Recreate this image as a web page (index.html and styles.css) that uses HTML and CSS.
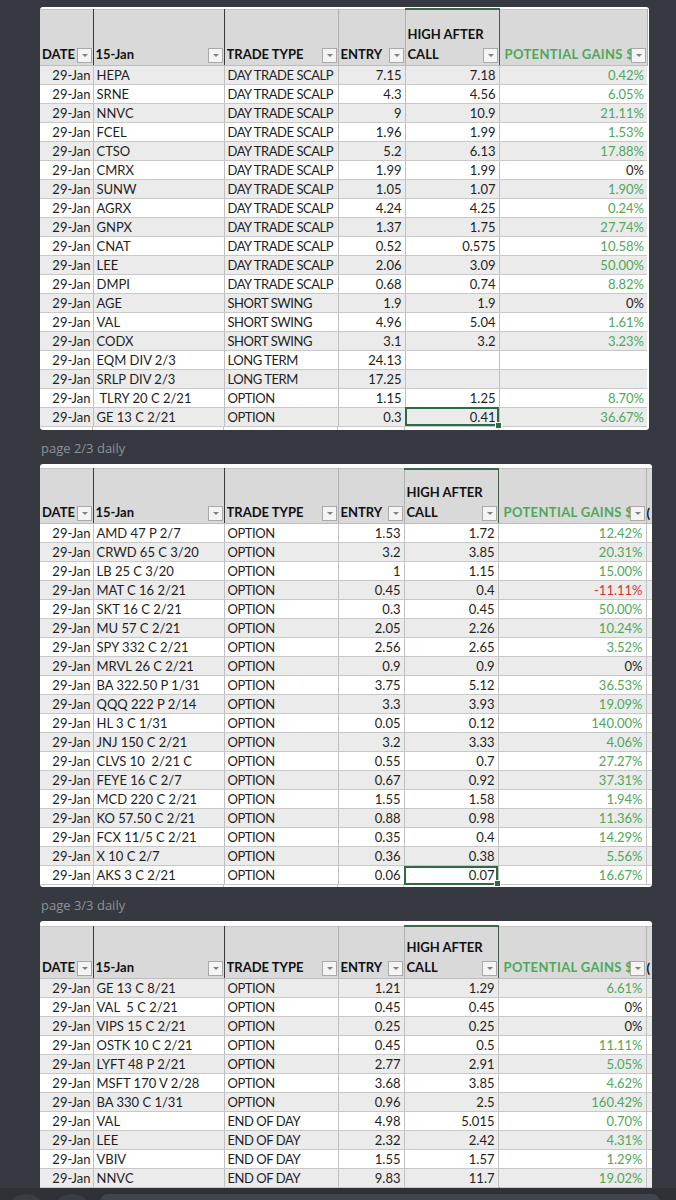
FILE: index.html
```html
<!DOCTYPE html>
<html>
<head>
<meta charset="utf-8">
<link rel="stylesheet" href="styles.css">
</head>
<body>
<div class="page">

  <div class="sheet s1">
    <table class="grid">
      <colgroup><col class="c-date"><col class="c-name"><col class="c-type"><col class="c-entry1"><col class="c-high"><col class="c-pot"></colgroup>
      <thead>
        <tr class="hrow">
          <th class="dk"><div class="h"><span class="ht">DATE</span><span class="dd"></span></div></th>
          <th class="dk"><div class="h"><span class="ht">15-Jan</span><span class="dd"></span></div></th>
          <th class="lt"><div class="h"><span class="ht">TRADE TYPE</span><span class="dd"></span></div></th>
          <th class="lt"><div class="h"><span class="ht">ENTRY</span><span class="dd"></span></div></th>
          <th class="sel"><div class="h"><span class="ht two">HIGH AFTER<br>CALL</span><span class="dd"></span></div></th>
          <th class="lt"><div class="h"><span class="ht green">POTENTIAL GAINS $</span><span class="dd"></span></div></th>
        </tr>
      </thead>
      <tbody class="odd-gray">
        <tr><td class="r">29-Jan</td><td>HEPA</td><td class="t">DAY TRADE SCALP</td><td class="r">7.15</td><td class="r">7.18</td><td class="r g">0.42%</td></tr>
        <tr><td class="r">29-Jan</td><td>SRNE</td><td class="t">DAY TRADE SCALP</td><td class="r">4.3</td><td class="r">4.56</td><td class="r g">6.05%</td></tr>
        <tr><td class="r">29-Jan</td><td>NNVC</td><td class="t">DAY TRADE SCALP</td><td class="r">9</td><td class="r">10.9</td><td class="r g">21.11%</td></tr>
        <tr><td class="r">29-Jan</td><td>FCEL</td><td class="t">DAY TRADE SCALP</td><td class="r">1.96</td><td class="r">1.99</td><td class="r g">1.53%</td></tr>
        <tr><td class="r">29-Jan</td><td>CTSO</td><td class="t">DAY TRADE SCALP</td><td class="r">5.2</td><td class="r">6.13</td><td class="r g">17.88%</td></tr>
        <tr><td class="r">29-Jan</td><td>CMRX</td><td class="t">DAY TRADE SCALP</td><td class="r">1.99</td><td class="r">1.99</td><td class="r">0%</td></tr>
        <tr><td class="r">29-Jan</td><td>SUNW</td><td class="t">DAY TRADE SCALP</td><td class="r">1.05</td><td class="r">1.07</td><td class="r g">1.90%</td></tr>
        <tr><td class="r">29-Jan</td><td>AGRX</td><td class="t">DAY TRADE SCALP</td><td class="r">4.24</td><td class="r">4.25</td><td class="r g">0.24%</td></tr>
        <tr><td class="r">29-Jan</td><td>GNPX</td><td class="t">DAY TRADE SCALP</td><td class="r">1.37</td><td class="r">1.75</td><td class="r g">27.74%</td></tr>
        <tr><td class="r">29-Jan</td><td>CNAT</td><td class="t">DAY TRADE SCALP</td><td class="r">0.52</td><td class="r">0.575</td><td class="r g">10.58%</td></tr>
        <tr><td class="r">29-Jan</td><td>LEE</td><td class="t">DAY TRADE SCALP</td><td class="r">2.06</td><td class="r">3.09</td><td class="r g">50.00%</td></tr>
        <tr><td class="r">29-Jan</td><td>DMPI</td><td class="t">DAY TRADE SCALP</td><td class="r">0.68</td><td class="r">0.74</td><td class="r g">8.82%</td></tr>
        <tr><td class="r">29-Jan</td><td>AGE</td><td class="t">SHORT SWING</td><td class="r">1.9</td><td class="r">1.9</td><td class="r">0%</td></tr>
        <tr><td class="r">29-Jan</td><td>VAL</td><td class="t">SHORT SWING</td><td class="r">4.96</td><td class="r">5.04</td><td class="r g">1.61%</td></tr>
        <tr><td class="r">29-Jan</td><td>CODX</td><td class="t">SHORT SWING</td><td class="r">3.1</td><td class="r">3.2</td><td class="r g">3.23%</td></tr>
        <tr><td class="r">29-Jan</td><td>EQM DIV 2/3</td><td class="t">LONG TERM</td><td class="r">24.13</td><td class="r"></td><td class="r"></td></tr>
        <tr><td class="r">29-Jan</td><td>SRLP DIV 2/3</td><td class="t">LONG TERM</td><td class="r">17.25</td><td class="r"></td><td class="r"></td></tr>
        <tr><td class="r">29-Jan</td><td>&nbsp;TLRY 20 C 2/21</td><td class="t">OPTION</td><td class="r">1.15</td><td class="r">1.25</td><td class="r g">8.70%</td></tr>
        <tr><td class="r">29-Jan</td><td>GE 13 C 2/21</td><td class="t">OPTION</td><td class="r">0.3</td><td class="r cur"><span class="cv">0.41</span><span class="handle"></span></td><td class="r g">36.67%</td></tr>
      </tbody>
    </table>
    <div class="tail"><span></span><span></span><span></span><span></span><span></span><span></span></div>
  </div>

  <div class="label">page 2/3 daily</div>

  <div class="sheet s2">
    <table class="grid">
      <colgroup><col class="c-date"><col class="c-name"><col class="c-type"><col class="c-entry2"><col class="c-high"><col class="c-pot"><col class="c-extra"></colgroup>
      <thead>
        <tr class="hrow h55">
          <th class="dk"><div class="h"><span class="ht">DATE</span><span class="dd"></span></div></th>
          <th class="dk"><div class="h"><span class="ht">15-Jan</span><span class="dd"></span></div></th>
          <th class="lt"><div class="h"><span class="ht">TRADE TYPE</span><span class="dd"></span></div></th>
          <th class="lt"><div class="h"><span class="ht">ENTRY</span><span class="dd"></span></div></th>
          <th class="sel"><div class="h"><span class="ht two">HIGH AFTER<br>CALL</span><span class="dd"></span></div></th>
          <th class="lt"><div class="h"><span class="ht green">POTENTIAL GAINS $</span><span class="dd"></span></div></th>
          <th class="lt extra"><div class="h"><span class="ht">(</span></div></th>
        </tr>
      </thead>
      <tbody class="even-gray">
        <tr><td class="r">29-Jan</td><td>AMD 47 P 2/7</td><td class="t">OPTION</td><td class="r">1.53</td><td class="r">1.72</td><td class="r g">12.42%</td><td></td></tr>
        <tr><td class="r">29-Jan</td><td>CRWD 65 C 3/20</td><td class="t">OPTION</td><td class="r">3.2</td><td class="r">3.85</td><td class="r g">20.31%</td><td></td></tr>
        <tr><td class="r">29-Jan</td><td>LB 25 C 3/20</td><td class="t">OPTION</td><td class="r">1</td><td class="r">1.15</td><td class="r g">15.00%</td><td></td></tr>
        <tr><td class="r">29-Jan</td><td>MAT C 16 2/21</td><td class="t">OPTION</td><td class="r">0.45</td><td class="r">0.4</td><td class="r red">-11.11%</td><td></td></tr>
        <tr><td class="r">29-Jan</td><td>SKT 16 C 2/21</td><td class="t">OPTION</td><td class="r">0.3</td><td class="r">0.45</td><td class="r g">50.00%</td><td></td></tr>
        <tr><td class="r">29-Jan</td><td>MU 57 C 2/21</td><td class="t">OPTION</td><td class="r">2.05</td><td class="r">2.26</td><td class="r g">10.24%</td><td></td></tr>
        <tr><td class="r">29-Jan</td><td>SPY 332 C 2/21</td><td class="t">OPTION</td><td class="r">2.56</td><td class="r">2.65</td><td class="r g">3.52%</td><td></td></tr>
        <tr><td class="r">29-Jan</td><td>MRVL 26 C 2/21</td><td class="t">OPTION</td><td class="r">0.9</td><td class="r">0.9</td><td class="r">0%</td><td></td></tr>
        <tr><td class="r">29-Jan</td><td>BA 322.50 P 1/31</td><td class="t">OPTION</td><td class="r">3.75</td><td class="r">5.12</td><td class="r g">36.53%</td><td></td></tr>
        <tr><td class="r">29-Jan</td><td>QQQ 222 P 2/14</td><td class="t">OPTION</td><td class="r">3.3</td><td class="r">3.93</td><td class="r g">19.09%</td><td></td></tr>
        <tr><td class="r">29-Jan</td><td>HL 3 C 1/31</td><td class="t">OPTION</td><td class="r">0.05</td><td class="r">0.12</td><td class="r g">140.00%</td><td></td></tr>
        <tr><td class="r">29-Jan</td><td>JNJ 150 C 2/21</td><td class="t">OPTION</td><td class="r">3.2</td><td class="r">3.33</td><td class="r g">4.06%</td><td></td></tr>
        <tr><td class="r">29-Jan</td><td>CLVS 10&nbsp;&nbsp;2/21 C</td><td class="t">OPTION</td><td class="r">0.55</td><td class="r">0.7</td><td class="r g">27.27%</td><td></td></tr>
        <tr><td class="r">29-Jan</td><td>FEYE 16 C 2/7</td><td class="t">OPTION</td><td class="r">0.67</td><td class="r">0.92</td><td class="r g">37.31%</td><td></td></tr>
        <tr><td class="r">29-Jan</td><td>MCD 220 C 2/21</td><td class="t">OPTION</td><td class="r">1.55</td><td class="r">1.58</td><td class="r g">1.94%</td><td></td></tr>
        <tr><td class="r">29-Jan</td><td>KO 57.50 C 2/21</td><td class="t">OPTION</td><td class="r">0.88</td><td class="r">0.98</td><td class="r g">11.36%</td><td></td></tr>
        <tr><td class="r">29-Jan</td><td>FCX 11/5 C 2/21</td><td class="t">OPTION</td><td class="r">0.35</td><td class="r">0.4</td><td class="r g">14.29%</td><td></td></tr>
        <tr><td class="r">29-Jan</td><td>X 10 C 2/7</td><td class="t">OPTION</td><td class="r">0.36</td><td class="r">0.38</td><td class="r g">5.56%</td><td></td></tr>
        <tr><td class="r">29-Jan</td><td>AKS 3 C 2/21</td><td class="t">OPTION</td><td class="r">0.06</td><td class="r cur"><span class="cv">0.07</span><span class="handle"></span></td><td class="r g">16.67%</td><td></td></tr>
      </tbody>
    </table>
    <div class="tail short"><span></span><span></span><span></span><span></span><span></span><span></span></div>
  </div>

  <div class="label">page 3/3 daily</div>

  <div class="sheet s2">
    <table class="grid">
      <colgroup><col class="c-date"><col class="c-name"><col class="c-type"><col class="c-entry2"><col class="c-high"><col class="c-pot"><col class="c-extra"></colgroup>
      <thead>
        <tr class="hrow h52">
          <th class="dk"><div class="h"><span class="ht">DATE</span><span class="dd"></span></div></th>
          <th class="dk"><div class="h"><span class="ht">15-Jan</span><span class="dd"></span></div></th>
          <th class="lt"><div class="h"><span class="ht">TRADE TYPE</span><span class="dd"></span></div></th>
          <th class="lt"><div class="h"><span class="ht">ENTRY</span><span class="dd"></span></div></th>
          <th class="sel"><div class="h"><span class="ht two">HIGH AFTER<br>CALL</span><span class="dd"></span></div></th>
          <th class="lt"><div class="h"><span class="ht green">POTENTIAL GAINS $</span><span class="dd"></span></div></th>
          <th class="lt extra"><div class="h"><span class="ht">(</span></div></th>
        </tr>
      </thead>
      <tbody class="odd-gray">
        <tr><td class="r">29-Jan</td><td>GE 13 C 8/21</td><td class="t">OPTION</td><td class="r">1.21</td><td class="r">1.29</td><td class="r g">6.61%</td><td></td></tr>
        <tr><td class="r">29-Jan</td><td>VAL&nbsp;&nbsp;5 C 2/21</td><td class="t">OPTION</td><td class="r">0.45</td><td class="r">0.45</td><td class="r">0%</td><td></td></tr>
        <tr><td class="r">29-Jan</td><td>VIPS 15 C 2/21</td><td class="t">OPTION</td><td class="r">0.25</td><td class="r">0.25</td><td class="r">0%</td><td></td></tr>
        <tr><td class="r">29-Jan</td><td>OSTK 10 C 2/21</td><td class="t">OPTION</td><td class="r">0.45</td><td class="r">0.5</td><td class="r g">11.11%</td><td></td></tr>
        <tr><td class="r">29-Jan</td><td>LYFT 48 P 2/21</td><td class="t">OPTION</td><td class="r">2.77</td><td class="r">2.91</td><td class="r g">5.05%</td><td></td></tr>
        <tr><td class="r">29-Jan</td><td>MSFT 170 V 2/28</td><td class="t">OPTION</td><td class="r">3.68</td><td class="r">3.85</td><td class="r g">4.62%</td><td></td></tr>
        <tr><td class="r">29-Jan</td><td>BA 330 C 1/31</td><td class="t">OPTION</td><td class="r">0.96</td><td class="r">2.5</td><td class="r g">160.42%</td><td></td></tr>
        <tr><td class="r">29-Jan</td><td>VAL</td><td class="t">END OF DAY</td><td class="r">4.98</td><td class="r">5.015</td><td class="r g">0.70%</td><td></td></tr>
        <tr><td class="r">29-Jan</td><td>LEE</td><td class="t">END OF DAY</td><td class="r">2.32</td><td class="r">2.42</td><td class="r g">4.31%</td><td></td></tr>
        <tr><td class="r">29-Jan</td><td>VBIV</td><td class="t">END OF DAY</td><td class="r">1.55</td><td class="r">1.57</td><td class="r g">1.29%</td><td></td></tr>
        <tr><td class="r">29-Jan</td><td>NNVC</td><td class="t">END OF DAY</td><td class="r">9.83</td><td class="r mark">11.7</td><td class="r g">19.02%</td><td></td></tr>
      </tbody>
    </table>
    <div class="tail short"><span></span><span></span><span></span><span></span><span></span><span></span></div>
  </div>

</div>
<div class="footer"><span class="blob"></span><span class="blob"></span><span class="bar"></span></div>
</body>
</html>
```

FILE: styles.css
```css
html, body {
  margin: 0;
  padding: 0;
}
body {
  background: #36393f;
  width: 676px;
  height: 1200px;
  overflow: hidden;
  position: relative;
  font-family: Lato, "Liberation Sans", sans-serif;
}
.page {
  padding: 7px 0 0 40px;
  display: flex;
  flex-direction: column;
  align-items: flex-start;
}
.sheet {
  background: #ffffff;
  border-radius: 3px;
  padding-top: 1px;
  overflow: hidden;
  width: 609px;
}
.sheet.s2 {
  width: 612px;
  padding-top: 4px;
}
.grid {
  border-collapse: collapse;
  table-layout: fixed;
  font-size: 13px;
  color: #1e1e1e;
}
.s1 .grid { width: 607px; }
.s2 .grid { width: 612px; }
.c-date { width: 53px; }
.c-name { width: 131px; }
.c-type { width: 114px; }
.c-entry1 { width: 67px; }
.c-entry2 { width: 66px; }
.c-high { width: 94px; }
.c-pot { width: 148px; }
.c-extra { width: 6px; }

.hrow { height: 56px; }
.hrow.h55 { height: 55px; }
.hrow.h52 { height: 52px; }
.hrow th {
  background: #d9d9d9;
  padding: 0 1px 1px 2px;
  vertical-align: bottom;
  text-align: left;
  font-weight: 700;
  font-size: 13px;
  color: #111;
  border-bottom: 1px solid #bdbdbd;
  border-top: 1px solid #c4c4c4;
}
.hrow th.dk { border-right: 1px solid #3a3a3a; }
.hrow th.lt { border-right: 1px solid #b0b0b0; }
.hrow th.sel {
  border-right: 1px solid #3c5e48;
  border-left: 1px solid #3c5e48;
  border-top: 2px solid #3c6b4c;
}
.hrow th.extra { border-right: none; padding: 0; }
.h {
  display: flex;
  align-items: flex-end;
  gap: 2px;
}
.ht {
  flex: 1;
  min-width: 0;
  white-space: nowrap;
  overflow: hidden;
  line-height: 20px;
}
.ht.two { overflow: visible; }
.ht.green {
  color: #4fa858;
  letter-spacing: 0.35px;
  padding-left: 3px;
  margin-right: -2px;
  text-overflow: clip;
}
.dd {
  flex: none;
  width: 13px;
  height: 13px;
  margin-bottom: 1px;
  background: #f4f4f4;
  border: 1px solid #a9a9a9;
  position: relative;
}
.dd::after {
  content: "";
  position: absolute;
  left: 4px;
  top: 5px;
  border-left: 3px solid transparent;
  border-right: 3px solid transparent;
  border-top: 3px solid #808080;
}

.grid td {
  height: 18px;
  padding: 0 3px;
  border-bottom: 1px solid #c8c8c8;
  border-right: 1px solid #c0c0c0;
  white-space: pre;
  overflow: hidden;
  line-height: 18px;
}
.grid td.t { letter-spacing: -0.45px; }
.grid td:first-child { padding-right: 2px; }
.grid td:last-child { border-right: none; }
.odd-gray tr:nth-child(odd) td { background: #ebebeb; }
.even-gray tr:nth-child(even) td { background: #ebebeb; }
.r { text-align: right; }
.g { color: #4fa858; }
.red { color: #e0302c; }

.grid td.cur {
  position: relative;
  outline: 2px solid #2f6a44;
  outline-offset: -2px;
  overflow: visible;
}
.handle {
  position: absolute;
  right: -3px;
  bottom: -3px;
  width: 5px;
  height: 5px;
  background: #2f6a44;
  border: 1px solid #fff;
}
.grid td.mark {
  position: relative;
  overflow: visible;
}
.grid td.mark::after {
  content: "";
  position: absolute;
  right: -5px;
  bottom: -4px;
  border-left: 4px solid #2f6a44;
  border-top: 4px solid transparent;
  border-bottom: 0;
}

.tail {
  display: grid;
  grid-template-columns: 53px 131px 114px 67px 94px 148px;
  height: 3px;
}
.tail.short { grid-template-columns: 53px 131px 114px 66px 94px 148px; height: 2px; }
.tail span { border-right: 1px solid #c0c0c0; }
.tail span:last-child { border-right: none; }

.label {
  color: #8e9297;
  font-family: "Open Sans", Lato, sans-serif;
  font-size: 13px;
  height: 34px;
  line-height: 37px;
  padding-left: 1px;
}

.footer {
  position: absolute;
  left: 0;
  top: 1188px;
  width: 676px;
  height: 12px;
  background: #2f3136;
  overflow: hidden;
}
.footer .blob {
  display: inline-block;
  width: 40px;
  height: 40px;
  border-radius: 50%;
  background: #3a3d43;
  margin: 6px 0 0 6px;
}
.footer .bar {
  position: absolute;
  left: 100px;
  top: 6px;
  width: 560px;
  height: 20px;
  border-radius: 8px;
  background: #40444b;
}
```
